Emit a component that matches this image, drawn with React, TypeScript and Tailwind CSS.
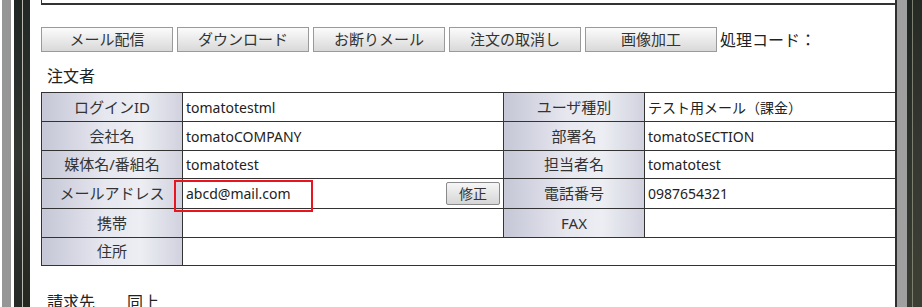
import React from "react";

const jp = { fontFamily: '"Noto Sans", "Noto Sans CJK JP", sans-serif' };

function Btn({ label }: { label: string }) {
  return (
    <div className="w-[132px] h-[25px] border border-[#9a9a9a] bg-gradient-to-b from-[#fbfbfb] to-[#d9d9d9] flex items-center justify-center text-[15px] text-[#333] leading-none">
      {label}
    </div>
  );
}

const labelCls =
  "border border-[#333] text-center text-[15px] text-[#333] bg-[linear-gradient(90deg,#c6c7d6_0%,#e6e7ef_45%,#eceef3_70%,#d0d1de_100%)] w-[141px] p-0";
const valueCls = "border border-[#333] text-[14px] text-[#222] pl-[3px] text-left p-0";

export default function App() {
  return (
    <div className="w-[922px] h-[307px] overflow-hidden flex bg-white" style={jp}>
      {/* left decoration */}
      <div className="w-[2px] h-full bg-white" />
      <div className="w-[9px] h-full bg-[#969696]" />
      <div className="w-[3px] h-full bg-white" />
      <div className="w-[8px] h-full bg-gradient-to-b from-[#1e2624] via-[#323632] to-[#262a26]" />
      <div className="w-[1px] h-full bg-[#b8b8b0]" />
      <div className="w-[7px] h-full bg-gradient-to-b from-[#222826] via-[#30342e] to-[#24281f]" />

      {/* main white panel */}
      <div className="w-[865px] h-full bg-white overflow-hidden relative pl-[11px]">
        <div className="w-[900px] h-[5px] border-l border-b-2 border-[#333]" />
        <div className="flex items-center gap-[4px] mt-[22px]">
          <Btn label="メール配信" />
          <Btn label="ダウンロード" />
          <Btn label="お断りメール" />
          <Btn label="注文の取消し" />
          <Btn label="画像加工" />
          <span className="text-[16px] text-[#222] ml-[-1px]">処理コード：</span>
        </div>
        <div className="text-[16px] text-[#222] pl-[6px] mt-[12px] leading-[24px]">注文者</div>
        <table className="border-collapse mt-[4px] w-[870px] table-fixed relative">
          <colgroup>
            <col className="w-[141px]" />
            <col className="w-[321px]" />
            <col className="w-[141px]" />
            <col />
          </colgroup>
          <tbody>
            <tr className="h-[29px]">
              <td className={labelCls}>ログインID</td>
              <td className={valueCls}>tomatotestml</td>
              <td className={labelCls}>ユーザ種別</td>
              <td className={valueCls}>テスト用メール（課金）</td>
            </tr>
            <tr className="h-[29px]">
              <td className={labelCls}>会社名</td>
              <td className={valueCls}>tomatoCOMPANY</td>
              <td className={labelCls}>部署名</td>
              <td className={valueCls}>tomatoSECTION</td>
            </tr>
            <tr className="h-[28px]">
              <td className={labelCls}>媒体名/番組名</td>
              <td className={valueCls}>tomatotest</td>
              <td className={labelCls}>担当者名</td>
              <td className={valueCls}>tomatotest</td>
            </tr>
            <tr className="h-[30px]">
              <td className={labelCls}>メールアドレス</td>
              <td className={valueCls}>
                <div className="flex items-center justify-between pr-[3px]">
                  <span>abcd@mail.com</span>
                  <span className="w-[54px] h-[23px] border border-[#8a8a8a] rounded-[2px] bg-gradient-to-b from-[#f6f6f6] to-[#d6d6d6] flex items-center justify-center text-[14px] text-[#333]">
                    修正
                  </span>
                </div>
              </td>
              <td className={labelCls}>電話番号</td>
              <td className={valueCls}>0987654321</td>
            </tr>
            <tr className="h-[29px]">
              <td className={labelCls}>携帯</td>
              <td className={valueCls}></td>
              <td className={labelCls}>FAX</td>
              <td className={valueCls}></td>
            </tr>
            <tr className="h-[28px]">
              <td className={labelCls}>住所</td>
              <td className={valueCls} colSpan={3}></td>
            </tr>
          </tbody>
        </table>
        <div className="absolute left-[144px] top-[180px] w-[139px] h-[32px] border-2 border-[#e8141e] pointer-events-none" />
        <div className="flex text-[16px] text-[#222] pl-[6px] mt-[24px] leading-[24px]">
          <span>請求先</span>
          <span className="ml-[32px]">同上</span>
        </div>
      </div>

      {/* right decoration */}
      <div className="w-[2px] h-full bg-[#2e2e2e]" />
      <div className="w-[10px] h-full bg-[#a0a0a0]" />
      <div className="w-[5px] h-full bg-gradient-to-b from-[#1e2420] via-[#2d322c] to-[#3a3e32]" />
      <div className="w-[1px] h-full bg-[#7c7e70]" />
      <div className="w-[9px] h-full bg-gradient-to-b from-[#262a24] via-[#343830] to-[#3c4034]" />
    </div>
  );
}
